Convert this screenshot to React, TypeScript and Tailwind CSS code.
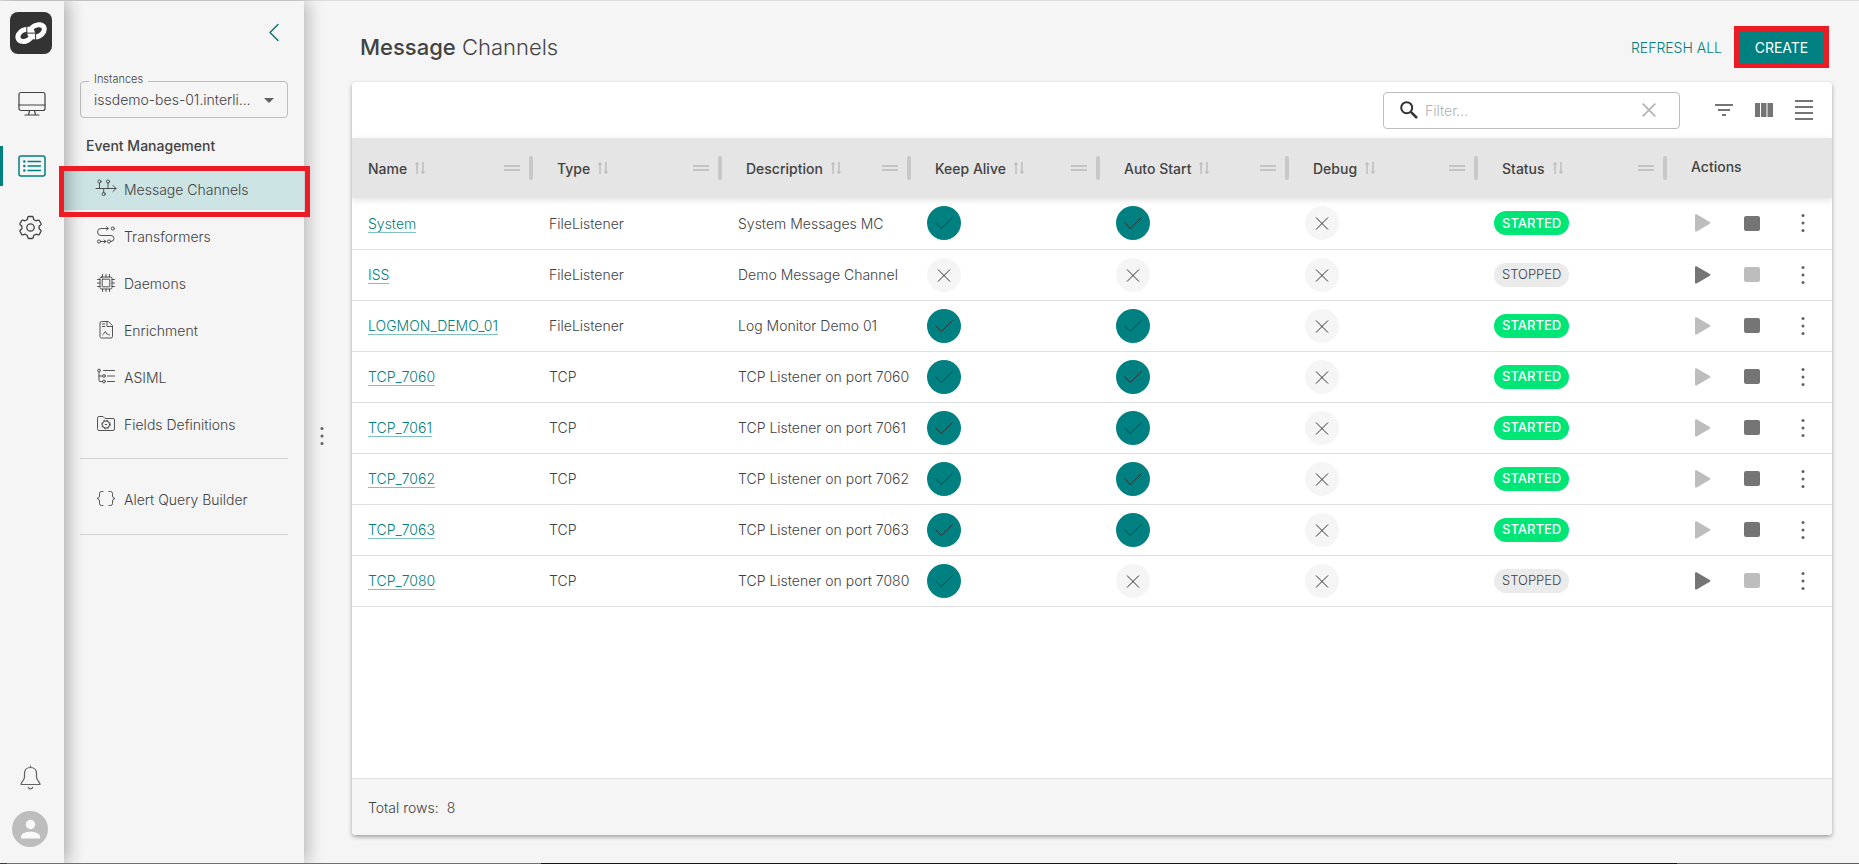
import type { ReactNode } from "react";

type Channel = {
  name: string;
  type: string;
  description: string;
  keepAlive: boolean;
  autoStart: boolean;
  debug: boolean;
  started: boolean;
};

const channels: Channel[] = [
  { name: "System", type: "FileListener", description: "System Messages MC", keepAlive: true, autoStart: true, debug: false, started: true },
  { name: "ISS", type: "FileListener", description: "Demo Message Channel", keepAlive: false, autoStart: false, debug: false, started: false },
  { name: "LOGMON_DEMO_01", type: "FileListener", description: "Log Monitor Demo 01", keepAlive: true, autoStart: true, debug: false, started: true },
  { name: "TCP_7060", type: "TCP", description: "TCP Listener on port 7060", keepAlive: true, autoStart: true, debug: false, started: true },
  { name: "TCP_7061", type: "TCP", description: "TCP Listener on port 7061", keepAlive: true, autoStart: true, debug: false, started: true },
  { name: "TCP_7062", type: "TCP", description: "TCP Listener on port 7062", keepAlive: true, autoStart: true, debug: false, started: true },
  { name: "TCP_7063", type: "TCP", description: "TCP Listener on port 7063", keepAlive: true, autoStart: true, debug: false, started: true },
  { name: "TCP_7080", type: "TCP", description: "TCP Listener on port 7080", keepAlive: true, autoStart: false, debug: false, started: false },
];

const columns = ["Name", "Type", "Description", "Keep Alive", "Auto Start", "Debug", "Status"];

function Glyph({ size = 20, children, className = "" }: { size?: number; children: ReactNode; className?: string }) {
  return (
    <svg
      width={size}
      height={size}
      viewBox={`0 0 ${size} ${size}`}
      fill="none"
      stroke="currentColor"
      strokeWidth={0.9}
      strokeLinecap="round"
      strokeLinejoin="round"
      aria-hidden="true"
      className={`shrink-0 ${className}`}
    >
      {children}
    </svg>
  );
}

const navItems: { label: string; icon: ReactNode }[] = [
  {
    label: "Message Channels",
    icon: (
      <Glyph size={22}>
        <path d="M1 10.500H21M18 7.500l3 3-3 3M4.500 5v5.500M13 5v5.500M8.700 10.500v4" />
        <circle cx="4.500" cy="3.500" r="1.600" />
        <circle cx="13" cy="3.500" r="1.600" />
        <circle cx="8.700" cy="16" r="1.600" />
      </Glyph>
    ),
  },
  {
    label: "Transformers",
    icon: (
      <Glyph size={22}>
        <path d="M13 3.500H6a3.500 3.500 0 0 0 0 7h10a3 3 0 0 1 0 6M11.500 1.800l2 1.700-2 1.700M5.800 16.500H11M9 15l2 1.500-2 1.500" />
        <circle cx="17.800" cy="3.500" r="1.600" />
        <circle cx="4" cy="16.500" r="1.600" />
        <circle cx="14" cy="16.500" r="1.600" />
      </Glyph>
    ),
  },
  {
    label: "Daemons",
    icon: (
      <Glyph size={22}>
        <rect x="5" y="5" width="12" height="12" rx="1.500" />
        <rect x="7.200" y="7.200" width="7.600" height="7.600" rx=".5" />
        <path d="M7.500 2.500V5M11 2.500V5M14.500 2.500V5M7.500 17v2.500M11 17v2.500M14.500 17v2.500M2.500 7.500H5M2.500 11H5M2.500 14.500H5M17 7.500h2.500M17 11h2.500M17 14.500h2.500" />
      </Glyph>
    ),
  },
  {
    label: "Enrichment",
    icon: (
      <Glyph size={22}>
        <path d="M13 2.500H6.500A1.500 1.500 0 0 0 5 4v13.500A1.500 1.500 0 0 0 6.500 19h9.500a1.500 1.500 0 0 0 1.500-1.500V7zM12 2.800V7.500h5M7.300 5h2.500M7.300 7.500h2.500M7.500 16l1-1 1.800-2.500 1.500 2.500 1.700.5 1 .5" />
      </Glyph>
    ),
  },
  {
    label: "ASIML",
    icon: (
      <Glyph size={22}>
        <path d="M8.500 4.500h11M12.500 10h7M12.500 15.500h7M4 6v8.500a1 1 0 0 0 1 1h2.500M4 10h3.500" />
        <circle cx="4" cy="4.500" r="1.400" />
        <circle cx="9" cy="10" r="1.400" />
        <circle cx="9" cy="15.500" r="1.400" />
      </Glyph>
    ),
  },
  {
    label: "Fields Definitions",
    icon: (
      <Glyph size={22}>
        <path d="M2.500 5A1.500 1.500 0 0 1 4 3.500h4l2 2h8A1.500 1.500 0 0 1 19.500 7v9a1.500 1.500 0 0 1-1.500 1.500H4A1.500 1.500 0 0 1 2.500 16z" />
        <circle cx="11" cy="11.500" r="3.600" />
        <circle cx="11" cy="11.500" r="4.300" strokeDasharray="1.500 1.870" strokeWidth=".8" />
        <path d="M10.300 11.500h1.400" />
      </Glyph>
    ),
  },
];

function Logo() {
  return (
    <svg width="42" height="42" viewBox="0 0 42 42" aria-hidden="true" className="shrink-0">
      <rect width="42" height="42" rx="8" fill="#333333" />
      <g fill="none" stroke="#ffffff" strokeWidth="5">
        <ellipse cx="15.300" cy="23.300" rx="7.800" ry="5.600" transform="rotate(-28 15.300 23.300)" />
        <ellipse cx="27" cy="18.800" rx="7.800" ry="5.600" transform="rotate(-28 27 18.800)" />
      </g>
      <path d="M16.800 11.500v9.700h8.800v9" stroke="#333333" strokeWidth="1" fill="none" />
      <path d="M17.500 21.200h8" stroke="#8a8a8a" strokeWidth="1" fill="none" />
    </svg>
  );
}

function Rail() {
  return (
    <nav aria-label="Primary" className="relative z-20 flex w-16 shrink-0 flex-col items-start bg-[#f5f5f5] pt-[11px] pb-4 text-[#424242] shadow-[4px_0_16px_rgba(0,0,0,0.3)]">
      <a href="#home" aria-label="Home" className="ml-[10px]">
        <Logo />
      </a>
      <a href="#monitor" aria-label="Monitoring" className="mt-[30px] flex h-10 w-full items-center pl-[18px]">
        <Glyph size={28}>
          <rect x="1" y="2.500" width="26" height="18" rx="2" strokeWidth="1.200" />
          <path d="M1 15h26M11.500 20.500l-1 4.500M16.500 20.500l1 4.500M7 25h14" strokeWidth="1.200" />
        </Glyph>
      </a>
      <a href="#events" aria-label="Events" className="mt-[22px] flex h-10 w-full items-center border-l-3 border-[#008080] pl-[15px] text-[#008080]">
        <Glyph size={28}>
          <rect x="1" y="4" width="26" height="20" rx="2" strokeWidth="1.500" />
          <path d="M10 9.500h12.500M10 14h12.500M10 18.500h12.500" strokeWidth="1.300" />
          <path d="M6.300 9.500v0M6.300 14v0M6.300 18.500v0" strokeWidth="2.500" />
        </Glyph>
      </a>
      <a href="#settings" aria-label="Settings" className="mt-[21px] flex h-10 w-full items-center pl-[18px]">
        <Glyph size={25}>
          <circle cx="12.500" cy="12.500" r="3.700" strokeWidth="1.300" />
          <path
            strokeWidth="1.300"
            d="M10.800 1.500h3.400q.8 0 1 .8l.5 2.200 2.200 1.300 2.200-.7q.8-.2 1.200.5l1.700 2.900q.4.700-.2 1.300l-1.700 1.500v2.400l1.700 1.500q.6.600.2 1.300l-1.700 2.900q-.4.700-1.200.5l-2.200-.7-2.200 1.300-.5 2.200q-.2.800-1 .8h-3.400q-.8 0-1-.8l-.5-2.200-2.200-1.300-2.200.7q-.8.200-1.200-.5l-1.700-2.900q-.4-.7.200-1.300l1.700-1.500v-2.400l-1.700-1.500q-.6-.6-.2-1.300l1.700-2.900q.4-.7 1.200-.5l2.200.7 2.200-1.300.5-2.200q.2-.8 1-.8z"
          />
        </Glyph>
      </a>
      <button aria-label="Notifications" className="mt-auto ml-[18px] text-[#616161]">
        <Glyph size={25}>
          <path strokeWidth="1.200" d="M12.500 1v1.500M12.500 2.500c-3.800 0-6 2.700-6 6v3.500c0 3.500-3.500 4.500-3.500 7.500h19c0-3-3.500-4-3.500-7.500V8.500c0-3.300-2.200-6-6-6zM10.300 22.300c.5 2 3.900 2 4.400 0" />
        </Glyph>
      </button>
      <button aria-label="Account" className="mt-[21px] ml-3">
        <svg width="36" height="36" viewBox="0 0 36 36" aria-hidden="true">
          <circle cx="18" cy="18" r="18" fill="#bdbdbd" />
          <circle cx="18.500" cy="13.500" r="4.700" fill="#fafafa" />
          <path d="M9 27.500v-2c0-3.200 5-4.800 9.500-4.800s9.500 1.600 9.500 4.800v2z" fill="#fafafa" />
        </svg>
      </button>
    </nav>
  );
}

function NavLink({ label, icon }: { label: string; icon: ReactNode }) {
  const active = label === "Message Channels";
  return (
    <li>
      <a
        href="#"
        aria-current={active ? "page" : undefined}
        className={`flex h-10 items-center gap-[7px] pb-[2px] pl-[31px] text-[14px] font-light text-[#424242] ${active ? "bg-[#cce3e3]" : ""}`}
      >
        {icon}
        {label}
      </a>
    </li>
  );
}

function SidePanel() {
  return (
    <aside className="relative z-10 flex w-60 shrink-0 flex-col bg-[#f5f5f5] shadow-[4px_0_16px_rgba(0,0,0,0.25)]">
      <button aria-label="Collapse panel" className="mt-[21px] mr-5 self-end text-[#00696b]">
        <Glyph size={20}>
          <path d="M14 2.500 6 10.500l8 8" strokeWidth="1.300" />
        </Glyph>
      </button>
      <div className="relative mx-4 mt-[39px]">
        <label htmlFor="instance" className="absolute -top-[11px] left-[9px] bg-[#f5f5f5] px-[5px] text-[11px] leading-[18px] font-light text-[#424242]">
          Instances
        </label>
        <select
          id="instance"
          className="h-[37px] w-full appearance-none rounded border border-[#bdbdbd] bg-transparent pr-6 pl-[13px] text-[14px] font-light text-[#424242]"
        >
          <option>issdemo-bes-01.interli...</option>
        </select>
        <svg width="10" height="6" viewBox="0 0 10 6" aria-hidden="true" className="pointer-events-none absolute top-[17px] right-[14px]">
          <path d="M0 0h10L5 5z" fill="#616161" />
        </svg>
      </div>
      <h2 className="mt-4 pl-[22px] text-[14px] leading-6 font-medium text-[#424242]">Event Management</h2>
      <ul className="mt-3 flex flex-col gap-[7px]">
        {navItems.map((item) => (
          <NavLink key={item.label} {...item} />
        ))}
      </ul>
      <hr className="mx-4 mt-[13px] border-[#d2d2d2]" />
      <ul className="mt-[21px]">
        <NavLink
          label="Alert Query Builder"
          icon={
            <Glyph size={22}>
              <path d="M8 3.500H6.500a2 2 0 0 0-2 2v2.500a2.800 2.800 0 0 1-2.500 2.500 2.800 2.800 0 0 1 2.500 2.500v2.500a2 2 0 0 0 2 2H8M14 3.500h1.500a2 2 0 0 1 2 2v2.500a2.800 2.800 0 0 0 2.500 2.500 2.800 2.800 0 0 0-2.500 2.500v2.500a2 2 0 0 1-2 2H14" />
            </Glyph>
          }
        />
      </ul>
      <hr className="mx-4 mt-[14px] border-[#d2d2d2]" />
    </aside>
  );
}

function Dots() {
  return (
    <svg width="4" height="20" viewBox="0 0 4 20" fill="#616161" aria-hidden="true">
      <circle cx="2" cy="2.500" r="1.500" />
      <circle cx="2" cy="10" r="1.500" />
      <circle cx="2" cy="17.500" r="1.500" />
    </svg>
  );
}

function Flag({ on }: { on: boolean }) {
  return (
    <span className={`flex size-[34px] items-center justify-center rounded-full ${on ? "bg-[#008080]" : "bg-[#f5f5f5]"}`}>
      <svg width="20" height="20" viewBox="0 0 20 20" fill="none" stroke="#333333" strokeWidth="1" role="img" aria-label={on ? "Yes" : "No"}>
        {on ? <path d="M1.500 9.500 7.300 15.500 18.500 4.500" /> : <path d="M4 4.500l12 12M16 4.500l-12 12" />}
      </svg>
    </span>
  );
}

function HeaderCell({ label, first }: { label: string; first: boolean }) {
  return (
    <th scope="col" className="p-0 text-left font-medium">
      <div className={`flex items-center ${first ? "pl-4" : "pl-6"}`}>
        {label}
        <button aria-label={`Sort by ${label}`} className="ml-[7px] text-[#bdbdbd]">
          <svg width="12" height="14" viewBox="0 0 12 14" fill="none" stroke="currentColor" strokeWidth="1.500" aria-hidden="true">
            <path d="M3 13V2M9 1v11" />
            <path d="M.5 3.500 3 1l2.500 2.500zM6.500 10.500 9 13l2.500-2.500z" fill="currentColor" stroke="none" />
          </svg>
        </button>
        <span className="ml-auto flex h-[6px] w-4 flex-col justify-between">
          <span className="h-[2px] bg-[#c4c4c4]" />
          <span className="h-[2px] bg-[#c4c4c4]" />
        </span>
        <span className="ml-[9px] h-6 w-1 rounded-sm bg-[#c8c8c8]" />
      </div>
    </th>
  );
}

function ChannelRow({ row }: { row: Channel }) {
  return (
    <tr className="h-[51px] border-b border-[#e0e0e0]">
      <td className="p-0 pl-4 whitespace-nowrap">
        <a href="#" className="border-b border-[#80c0c0] text-[#008080]">
          {row.name}
        </a>
      </td>
      <td className="p-0 pl-4 whitespace-nowrap">{row.type}</td>
      <td className="p-0 pl-4 whitespace-nowrap">{row.description}</td>
      <td className="p-0 pl-4"><Flag on={row.keepAlive} /></td>
      <td className="p-0 pl-4"><Flag on={row.autoStart} /></td>
      <td className="p-0 pl-4"><Flag on={row.debug} /></td>
      <td className="p-0 pl-4">
        <span
          className={`inline-flex h-6 items-center rounded-full px-2 text-[13px] ${
            row.started ? "bg-[#00e676] font-medium text-white" : "bg-[#ebebeb] font-light text-[#424242]"
          }`}
        >
          {row.started ? "STARTED" : "STOPPED"}
        </span>
      </td>
      <td className="p-0">
        <div className="flex items-center pl-7">
          <button aria-label={`Start ${row.name}`} disabled={row.started} className={row.started ? "text-[#bdbdbd]" : "text-[#757575]"}>
            <svg width="16" height="18" viewBox="0 0 16 18" fill="currentColor" aria-hidden="true">
              <path d="M0 1.500C0 .3 1 0 2 .6l12.800 7.500c.8.500.8 1.200 0 1.700L2 17.300c-1 .6-2 .3-2-.9z" />
            </svg>
          </button>
          <button aria-label={`Stop ${row.name}`} disabled={!row.started} className={`ml-[33px] ${row.started ? "text-[#757575]" : "text-[#bdbdbd]"}`}>
            <svg width="16" height="15" viewBox="0 0 16 15" fill="currentColor" aria-hidden="true">
              <rect width="16" height="15" rx="2" />
            </svg>
          </button>
          <button aria-label={`More actions for ${row.name}`} className="ml-[41px]">
            <Dots />
          </button>
        </div>
      </td>
    </tr>
  );
}

export default function App() {
  return (
    <div className="flex min-h-screen flex-col border-t border-[#dedede] bg-[#f5f5f5] font-[Inter,'Liberation_Sans',sans-serif] text-[14px] text-[#424242]">
      <div className="relative flex flex-1">
        <Rail />
        <SidePanel />
        <div aria-hidden="true" className="pointer-events-none absolute top-[165px] left-[59px] z-30 h-[51px] w-[251px] border-5 border-[#ed1c24]" />
        <button aria-label="Resize panel" className="mt-2 mr-[28px] ml-4 self-center">
          <Dots />
        </button>
        <main className="flex min-w-0 flex-1 flex-col pr-[27px] pb-7">
          <header className="flex h-[81px] items-center pt-[12px] pr-[3px] pb-[1px] pl-2">
            <h1 className="text-[22px] font-light">
              <strong className="font-medium">Message</strong> Channels
            </h1>
            <button className="ml-auto text-[14px] font-light text-[#008080]">REFRESH ALL</button>
            <button className="ml-3 h-[42px] w-[95px] border-5 border-[#ed1c24] bg-[#008080] text-[14px] text-white">CREATE</button>
          </header>
          <section className="flex min-w-0 flex-1 flex-col overflow-hidden rounded bg-white shadow-[0_2px_4px_rgba(0,0,0,0.35)]">
            <div className="flex h-14 items-center justify-end pr-[19px] text-[#757575]">
              <div className="mr-[35px] flex h-[37px] w-[297px] items-center rounded border border-[#bdbdbd] pr-[23px] pl-4">
                <svg width="18" height="18" viewBox="0 0 18 18" fill="none" stroke="#333333" strokeWidth="2" aria-hidden="true" className="shrink-0">
                  <circle cx="6.700" cy="6.700" r="5.500" />
                  <path d="M10.800 10.800 17 17" strokeWidth="2.500" />
                </svg>
                <input
                  aria-label="Filter"
                  placeholder="Filter..."
                  className="ml-[7px] min-w-0 flex-1 bg-transparent text-[14px] font-light outline-none placeholder:text-[#b0b0b0]"
                />
                <button aria-label="Clear filter" className="text-[#b5b5b5]">
                  <svg width="14" height="14" viewBox="0 0 14 14" fill="none" stroke="currentColor" strokeWidth="1.800" aria-hidden="true">
                    <path d="M.7.7l12.600 12.600M13.300.7.7 13.300" />
                  </svg>
                </button>
              </div>
              <div className="flex items-center gap-[22px]">
                <button aria-label="Show filters">
                  <svg width="18" height="12" viewBox="0 0 18 12" fill="currentColor" aria-hidden="true">
                    <path d="M0 0h18v2H0zM3 5h12v2H3zM7 10h4v2H7z" />
                  </svg>
                </button>
                <button aria-label="Show columns">
                  <svg width="18" height="14" viewBox="0 0 18 14" fill="currentColor" aria-hidden="true">
                    <path d="M0 0h5v14H0zM6 0h5.500v14H6zM12.500 0H18v14h-5.500z" />
                  </svg>
                </button>
                <button aria-label="Row density">
                  <svg width="18" height="20" viewBox="0 0 18 20" fill="currentColor" aria-hidden="true">
                    <path d="M0 0h18v2H0zM0 6h18v2H0zM0 12h18v2H0zM0 18h18v2H0z" />
                  </svg>
                </button>
              </div>
            </div>
            <table className="w-full table-fixed border-collapse text-[14px]">
              <colgroup>
                <col className="w-[181px]" />
                <col />
                <col />
                <col />
                <col />
                <col />
                <col />
                <col className="w-[165px]" />
              </colgroup>
              <thead className="bg-[#e5e5e5] shadow-[0_2px_6px_rgba(0,0,0,0.12)]">
                <tr className="h-[60px]">
                  {columns.map((label, index) => (
                    <HeaderCell key={label} label={label} first={index === 0} />
                  ))}
                  <th scope="col" className="p-0 pb-1 pl-6 text-left font-medium">Actions</th>
                </tr>
              </thead>
              <tbody className="text-[14px] font-light">
                {channels.map((row) => (
                  <ChannelRow key={row.name} row={row} />
                ))}
              </tbody>
            </table>
            <footer className="mt-auto flex h-[57px] items-center gap-2 border-t border-[#e0e0e0] bg-[#f5f5f5] px-4 text-[14px] font-light">
              <span>Total rows:</span>
              <span>8</span>
            </footer>
          </section>
        </main>
      </div>
      <div aria-hidden="true" className="z-30 flex h-px">
        <span className="w-[7px] bg-[#1b4b63]" />
        <span className="w-[534px] bg-[#6f6f6f]" />
        <span className="flex-1 bg-[#141418]" />
        <span className="w-[182px] bg-[#5f5f5f]" />
      </div>
    </div>
  );
}
